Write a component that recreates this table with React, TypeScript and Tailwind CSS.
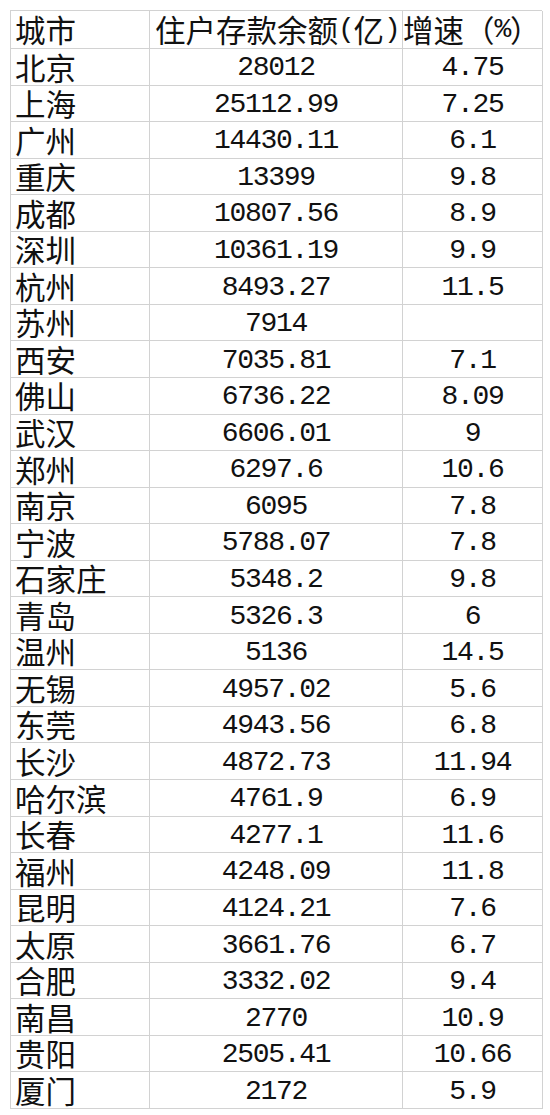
import React from "react";

const rows: [string, string, string][] = [
  ["北京", "28012", "4.75"],
  ["上海", "25112.99", "7.25"],
  ["广州", "14430.11", "6.1"],
  ["重庆", "13399", "9.8"],
  ["成都", "10807.56", "8.9"],
  ["深圳", "10361.19", "9.9"],
  ["杭州", "8493.27", "11.5"],
  ["苏州", "7914", ""],
  ["西安", "7035.81", "7.1"],
  ["佛山", "6736.22", "8.09"],
  ["武汉", "6606.01", "9"],
  ["郑州", "6297.6", "10.6"],
  ["南京", "6095", "7.8"],
  ["宁波", "5788.07", "7.8"],
  ["石家庄", "5348.2", "9.8"],
  ["青岛", "5326.3", "6"],
  ["温州", "5136", "14.5"],
  ["无锡", "4957.02", "5.6"],
  ["东莞", "4943.56", "6.8"],
  ["长沙", "4872.73", "11.94"],
  ["哈尔滨", "4761.9", "6.9"],
  ["长春", "4277.1", "11.6"],
  ["福州", "4248.09", "11.8"],
  ["昆明", "4124.21", "7.6"],
  ["太原", "3661.76", "6.7"],
  ["合肥", "3332.02", "9.4"],
  ["南昌", "2770", "10.9"],
  ["贵阳", "2505.41", "10.66"],
  ["厦门", "2172", "5.9"],
];

const cjk = "font-['Noto_Sans_CJK_SC',sans-serif] text-[30.5px] leading-none";
const mono = "font-['Liberation_Mono','Noto_Sans_CJK_SC',monospace] text-[28px] tracking-[-1.3px] leading-none";
const cell = "border-r border-b border-[#d2d2d2] flex items-center whitespace-nowrap overflow-visible text-[#111111]";

export default function App() {
  return (
    <div className="w-[550px] h-[1115px] bg-white pt-[10px] pl-[10px]">
      <div className="grid grid-cols-[139px_253px_140px] grid-rows-[38px_repeat(29,minmax(0,1fr))] h-[1099px] w-[532px] border-l border-t border-[#d2d2d2]">
        <div className={`${cell} ${cjk} pl-[4px]`}>城市</div>
        <div className={`${cell} ${cjk} pl-[5px]`}>
          住户存款余额<span className={mono}>(</span>亿<span className={mono}>)</span>
        </div>
        <div className={`${cell} ${cjk} pl-0`}>
          增速（<span className={mono}>%</span>）
        </div>
        {rows.map(([city, amt, rate]) => (
          <React.Fragment key={city}>
            <div className={`${cell} ${cjk} pl-[4px]`}>{city}</div>
            <div className={`${cell} ${mono} justify-center pt-[3px]`}>{amt}</div>
            <div className={`${cell} ${mono} justify-center pt-[3px]`}>{rate}</div>
          </React.Fragment>
        ))}
      </div>
    </div>
  );
}
